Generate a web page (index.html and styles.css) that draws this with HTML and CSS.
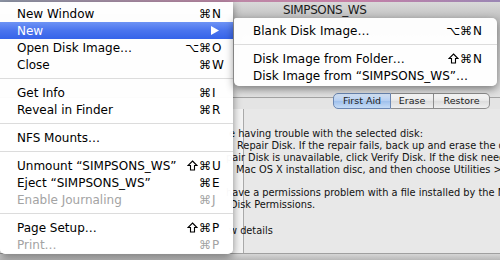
FILE: index.html
```html
<!DOCTYPE html>
<html lang="en">
<head>
  <meta charset="UTF-8" />
  <meta name="viewport" content="width=device-width, initial-scale=1.0" />
  <link rel="stylesheet" href="styles.css">
</head>
<body>
  <div class="screen">
    <div class="desktop-strip"></div>

    <!-- Disk Utility window behind the menus -->
    <div class="window">
      <div class="titlebar">SIMPSONS_WS</div>
      <div class="toolbar"></div>
      <div class="tabs">
        <div class="segmented">
          <span class="seg first selected">First Aid</span>
          <span class="seg">Erase</span>
          <span class="seg last">Restore</span>
        </div>
      </div>
      <div class="pane">
        <p class="line">e having trouble with the selected disk:</p>
        <p class="line in-8">Repair Disk. If the repair fails, back up and erase the disk.</p>
        <p class="line out-2">pair Disk is unavailable, click Verify Disk. If the disk needs repairs, start up from</p>
        <p class="line in-7">Mac OS X installation disc, and then choose Utilities &gt; Disk Utility.</p>
        <p class="line gap">have a permissions problem with a file installed by the Mac OS X installer, click Repair</p>
        <p class="line in-1">Disk Permissions.</p>
        <p class="line gap2">w details</p>
      </div>
    </div>
    <div class="bottom-strip"></div>

    <!-- File menu -->
    <ul class="menu main-menu">
      <li class="item"><span class="label">New Window</span><span class="keys"><span class="mods">&#8984;</span><span class="key">N</span></span></li>
      <li class="item active"><span class="label">New</span>
        <svg class="arrow" width="8" height="9" viewBox="0 0 8 9"><polygon points="0,0 8,4.5 0,9" fill="#fff"/></svg>
      </li>
      <li class="item"><span class="label">Open Disk Image…</span><span class="keys"><span class="mods">&#8997;&#8984;</span><span class="key">O</span></span></li>
      <li class="item"><span class="label">Close</span><span class="keys"><span class="mods">&#8984;</span><span class="key">W</span></span></li>
      <li class="sep"></li>
      <li class="item"><span class="label">Get Info</span><span class="keys"><span class="mods">&#8984;</span><span class="key">I</span></span></li>
      <li class="item"><span class="label">Reveal in Finder</span><span class="keys"><span class="mods">&#8984;</span><span class="key">R</span></span></li>
      <li class="sep"></li>
      <li class="item"><span class="label">NFS Mounts…</span></li>
      <li class="sep"></li>
      <li class="item"><span class="label">Unmount “SIMPSONS_WS”</span><span class="keys"><svg class="shift" width="11" height="11" viewBox="0 0 11 11"><polygon points="5.5,1 10,5.5 7.5,5.5 7.5,10 3.5,10 3.5,5.5 1,5.5" fill="none" stroke="currentColor" stroke-width="1.1"/></svg><span class="mods">&#8984;</span><span class="key">U</span></span></li>
      <li class="item"><span class="label">Eject “SIMPSONS_WS”</span><span class="keys"><span class="mods">&#8984;</span><span class="key">E</span></span></li>
      <li class="item disabled"><span class="label">Enable Journaling</span><span class="keys"><span class="mods">&#8984;</span><span class="key">J</span></span></li>
      <li class="sep"></li>
      <li class="item"><span class="label">Page Setup…</span><span class="keys"><svg class="shift" width="11" height="11" viewBox="0 0 11 11"><polygon points="5.5,1 10,5.5 7.5,5.5 7.5,10 3.5,10 3.5,5.5 1,5.5" fill="none" stroke="currentColor" stroke-width="1.1"/></svg><span class="mods">&#8984;</span><span class="key">P</span></span></li>
      <li class="item disabled"><span class="label">Print…</span><span class="keys"><span class="mods">&#8984;</span><span class="key">P</span></span></li>
    </ul>

    <!-- New submenu -->
    <ul class="menu sub-menu">
      <li class="item"><span class="label">Blank Disk Image…</span><span class="keys"><span class="mods">&#8997;&#8984;</span><span class="key">N</span></span></li>
      <li class="sep"></li>
      <li class="item"><span class="label">Disk Image from Folder…</span><span class="keys"><svg class="shift" width="11" height="11" viewBox="0 0 11 11"><polygon points="5.5,1 10,5.5 7.5,5.5 7.5,10 3.5,10 3.5,5.5 1,5.5" fill="none" stroke="currentColor" stroke-width="1.1"/></svg><span class="mods">&#8984;</span><span class="key">N</span></span></li>
      <li class="item"><span class="label">Disk Image from “SIMPSONS_WS”…</span></li>
    </ul>
  </div>
</body>
</html>
```

FILE: styles.css
```css
body {
  margin: 0;
  font-family: 'DejaVu Sans', sans-serif;
  background: #c4c4c4;
}

.screen {
  position: relative;
  width: 500px;
  height: 260px;
  overflow: hidden;
  display: flex;
  flex-direction: column;
}

.desktop-strip {
  height: 2px;
  background: linear-gradient(to right, #8f97a8, #b98aa6 40%, #c77fa6 70%, #9a86b4);
}

/* ---- background window ---- */

.window {
  height: 252px;
  display: flex;
  flex-direction: column;
  background: #e4e4e4;
}

.titlebar {
  height: 16px;
  line-height: 16px;
  padding-left: 283px;
  font-size: 12px;
  letter-spacing: -0.4px;
  color: #1c1c1c;
  background: linear-gradient(#d9d9d9, #c2c2c2);
}

.toolbar {
  height: 79px;
  background: linear-gradient(#c0c0c0, #e2e2e2);
  border-bottom: 1px solid #a3a3a3;
}

.tabs {
  margin-top: -5px;
  padding-left: 333px;
  height: 16px;
}

.segmented {
  display: flex;
  height: 16px;
}

.seg {
  box-sizing: border-box;
  height: 16px;
  line-height: 14px;
  font-size: 9.5px;
  text-align: center;
  color: #222;
  border: 1px solid #8d8d8d;
  border-left: none;
  background: linear-gradient(#fdfdfd, #e6e6e6 50%, #dcdcdc 51%, #efefef);
  width: 43px;
}

.seg.first {
  width: 58px;
  border-left: 1px solid #8d8d8d;
  border-radius: 5px 0 0 5px;
}

.seg.last {
  width: 56px;
  border-radius: 0 5px 5px 0;
}

.seg.selected {
  border-color: #6b87b3;
  background: linear-gradient(#d8e6f8, #b3cdf0 50%, #9fc0ec 51%, #c6dcf6);
}

.pane {
  flex: 1;
  padding: 19px 0 0 229px;
  overflow: hidden;
  white-space: nowrap;
  background: linear-gradient(to right, #f4f4f4 0 243px, #a9a9a9 243px 244px, #e8e8e8 244px);
  border-bottom: 1px solid #a0a0a0;
}

.line {
  margin: 0;
  font-size: 9.8px;
  line-height: 12px;
  color: #111;
}

.line.in-8 { text-indent: 8px; }
.line.in-7 { text-indent: 7px; }
.line.in-1 { text-indent: 1px; }
.line.out-2 { text-indent: -3px; }
.line.gap { margin-top: 11px; text-indent: -3px; }
.line.gap2 { margin-top: 14px; }

.bottom-strip {
  flex: 1;
  background: linear-gradient(#d6d6d6, #b9b9b9);
}

/* ---- menus ---- */

.menu {
  position: absolute;
  margin: 0;
  list-style: none;
  font-size: 12px;
  color: #000;
  background: rgba(255, 255, 255, 0.97);
  box-shadow: 0 3px 9px rgba(0, 0, 0, 0.45);
}

.main-menu {
  left: 0;
  top: 2px;
  width: 233px;
  height: 252px;
  box-sizing: border-box;
  padding: 3px 0 0;
  border-radius: 0 0 5px 5px;
}

.sub-menu {
  left: 234px;
  top: 18px;
  width: 263px;
  height: 68px;
  box-sizing: border-box;
  padding: 4px 0 0;
  border-radius: 2px 5px 5px 5px;
}

.item {
  display: flex;
  align-items: center;
  height: 17px;
  padding: 0 11px 0 17px;
}

.sub-menu .item {
  padding: 0 14px 0 19px;
}

.label {
  flex: 1;
}

.keys {
  display: flex;
  align-items: center;
}

.shift {
  margin-right: 1px;
}

.key {
  width: 10px;
  padding-left: 1px;
}

.item.active {
  color: #fff;
  background: linear-gradient(#6d93f5, #4a74ee 50%, #3563e9);
}

.item.active .arrow {
  margin-right: 3px;
}

.item.disabled {
  color: #a3a3a3;
}

.sep {
  height: 11px;
  background: linear-gradient(transparent 5px, #dcdcdc 5px 6px, transparent 6px);
}
```
